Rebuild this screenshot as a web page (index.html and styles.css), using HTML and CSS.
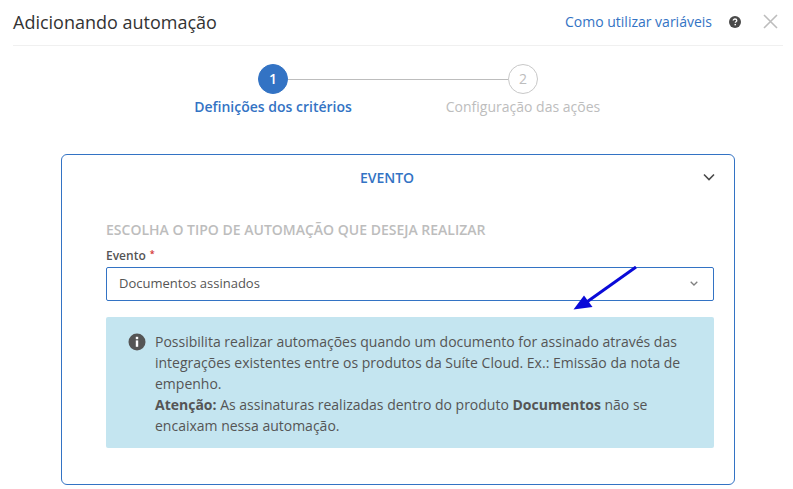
FILE: index.html
```html
<!DOCTYPE html>
<html lang="pt-BR">
<head>
    <meta charset="UTF-8">
    <meta name="viewport" content="width=device-width, initial-scale=1.0">
    <title>Adicionando automação</title>
    <link rel="stylesheet" href="styles.css">
</head>
<body>
    <div class="modal">
        <div class="modal-header">
            <h1>Adicionando automação</h1>
            <a href="#" class="help-link">Como utilizar variáveis</a>
            <svg class="help-icon" width="12" height="12" viewBox="0 0 12 12">
                <circle cx="6" cy="6" r="6" fill="#4a4a4a"/>
                <path d="M4.2 4.6c0-1 .8-1.6 1.8-1.6s1.8.6 1.8 1.5c0 1.2-1.500 1.200-1.500 2.300" fill="none" stroke="#fff" stroke-width="1.3"/>
                <rect x="5.500" y="7.900" width="1.500" height="1.400" fill="#fff"/>
            </svg>
            <svg class="close-icon" width="15" height="15" viewBox="0 0 15 15">
                <path d="M1 1l13 13M14 1L1 14" fill="none" stroke="#bdbdbd" stroke-width="1.6"/>
            </svg>
        </div>

        <div class="stepper">
            <div class="step active">
                <div class="step-track">
                    <span class="step-spacer"></span>
                    <span class="step-circle">1</span>
                    <span class="step-line"></span>
                </div>
                <div class="step-label">Definições dos critérios</div>
            </div>
            <div class="step">
                <div class="step-track">
                    <span class="step-line"></span>
                    <span class="step-circle">2</span>
                    <span class="step-spacer"></span>
                </div>
                <div class="step-label">Configuração das ações</div>
            </div>
        </div>

        <div class="card">
            <div class="card-header">
                <span class="card-title">EVENTO</span>
                <svg class="card-chevron" width="12" height="8" viewBox="0 0 12 8">
                    <path d="M1 1.500l5 5 5-5" fill="none" stroke="#4a4a4a" stroke-width="1.6"/>
                </svg>
            </div>
            <div class="card-body">
                <h2>ESCOLHA O TIPO DE AUTOMAÇÃO QUE DESEJA REALIZAR</h2>
                <label class="field-label">Evento <span class="required">*</span></label>
                <div class="select">
                    <span>Documentos assinados</span>
                    <svg width="8" height="5" viewBox="0 0 8 5">
                        <path d="M.7.7L4 4l3.300-3.300" fill="none" stroke="#808080" stroke-width="1.3"/>
                    </svg>
                </div>
                <div class="info">
                    <svg class="info-icon" width="18" height="18" viewBox="0 0 18 18">
                        <circle cx="9" cy="9" r="8.500" fill="#555"/>
                        <rect x="7.800" y="3.800" width="2.400" height="2.400" fill="#fff"/>
                        <rect x="7.800" y="7.400" width="2.400" height="6.400" fill="#fff"/>
                    </svg>
                    <p>Possibilita realizar automações quando um documento for assinado através das integrações existentes entre os produtos da Suíte Cloud. Ex.: Emissão da nota de empenho.<br><b>Atenção:</b> As assinaturas realizadas dentro do produto <b>Documentos</b> não se encaixam nessa automação.</p>
                </div>
            </div>
        </div>

        <!-- seta de destaque sobre o print -->
        <svg class="arrow" width="70" height="50" viewBox="0 0 70 50">
            <path d="M66 1L14 38" stroke="#0a0ad8" stroke-width="3" fill="none"/>
            <path d="M3.500 43.500L14 29.500L22.500 41z" fill="#0a0ad8"/>
        </svg>
    </div>
</body>
</html>
```

FILE: styles.css
```css
* {
    box-sizing: border-box;
}
body {
    font-family: "Open Sans", sans-serif;
    margin: 0;
    background-color: white;
    color: #555;
    overflow: hidden;
}
.modal {
    position: relative;
    height: 489px;
    padding: 0 10px 0 13px;
}
.modal-header {
    display: flex;
    align-items: center;
    height: 46px;
    padding-bottom: 2px;
    border-bottom: 1px solid #f0f0f0;
}
h1 {
    flex: 1;
    margin: 0;
    font-size: 18px;
    font-weight: 400;
    color: #333;
}
.help-link {
    font-size: 14px;
    color: #3373c4;
    text-decoration: none;
}
.help-icon {
    margin-left: 17px;
}
.close-icon {
    margin-left: 22px;
    margin-right: 5px;
}
.stepper {
    display: flex;
    justify-content: center;
    margin-top: 18px;
}
.step {
    width: 250px;
    text-align: center;
}
.step-track {
    display: flex;
    align-items: center;
}
.step-spacer,
.step-line {
    flex: 1;
}
.step-line {
    height: 1px;
    background-color: #bdbdbd;
}
.step-circle {
    width: 30px;
    height: 30px;
    border: 1px solid #c8c8c8;
    border-radius: 50%;
    font-size: 14px;
    line-height: 28px;
    color: #bdbdbd;
}
.step.active .step-circle {
    background-color: #3373c4;
    border-color: #3373c4;
    color: white;
    font-weight: 600;
}
.step-label {
    margin-top: 3px;
    font-size: 14px;
    line-height: 19px;
    color: #bdbdbd;
}
.step.active .step-label {
    color: #3373c4;
    font-weight: 600;
}
.card {
    position: relative;
    width: 674px;
    height: 331px;
    margin: 38px 0 0 48px;
    border: 1px solid #3373c4;
    border-radius: 6px;
}
.card-header {
    display: flex;
    justify-content: center;
    align-items: center;
    height: 44px;
    padding-right: 22px;
}
.card-title {
    font-size: 14px;
    font-weight: 600;
    color: #3373c4;
}
.card-chevron {
    position: absolute;
    right: 19px;
    top: 18px;
}
.card-body {
    padding: 21px 20px 0 44px;
}
h2 {
    margin: 0;
    font-size: 14px;
    font-weight: 600;
    line-height: 19px;
    color: #bdbdbd;
}
.field-label {
    display: block;
    margin-top: 6px;
    font-size: 12px;
    font-weight: 600;
    line-height: 18px;
    color: #555;
}
.required {
    margin-left: 1px;
    font-size: 9px;
    vertical-align: 3px;
    color: #d32f2f;
}
.select {
    display: flex;
    justify-content: space-between;
    align-items: center;
    height: 34px;
    margin-top: 2px;
    padding: 0 15px 2px 12px;
    border: 1px solid #3373c4;
    border-radius: 2px;
    font-size: 13px;
    color: #555;
}
.info {
    display: flex;
    gap: 9px;
    height: 131px;
    margin-top: 16px;
    padding: 14px 20px 0 22px;
    background-color: #c4e5f0;
    border-radius: 2px;
}
.info-icon {
    flex-shrink: 0;
    margin-top: 2px;
}
.info p {
    margin: 0;
    font-size: 14px;
    line-height: 21px;
    color: #555;
}
.arrow {
    position: absolute;
    left: 570px;
    top: 266px;
}
```
